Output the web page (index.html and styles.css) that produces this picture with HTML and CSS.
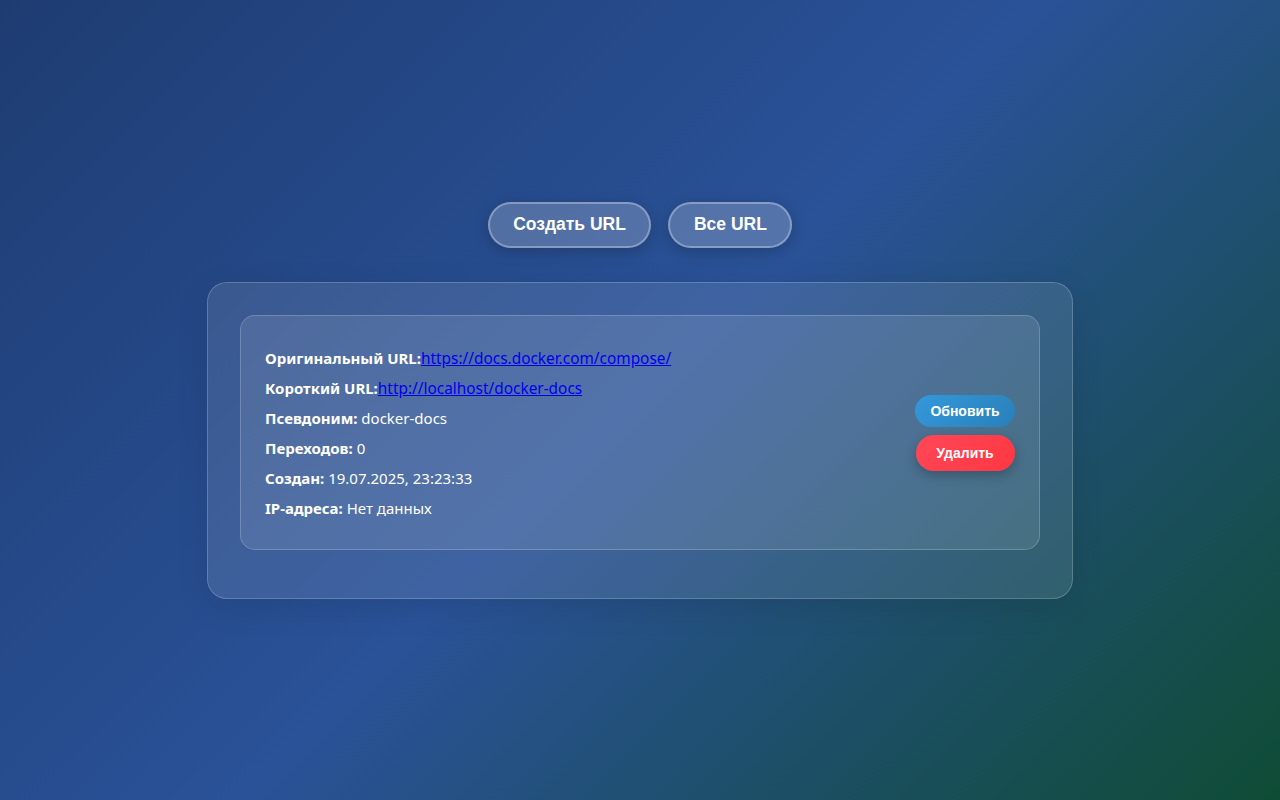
FILE: index.html
```html
<!DOCTYPE html>
<html lang="ru">
<head>
<meta charset="utf-8">
<title>URL</title>
<link rel="stylesheet" href="styles.css">
</head>
<body>
<main class="page">
  <nav class="nav">
    <button class="nav-btn">Создать URL</button>
    <button class="nav-btn">Все URL</button>
  </nav>
  <section class="panel">
    <div class="card">
      <div class="info">
        <p><strong>Оригинальный URL:</strong><a href="#">https://docs.docker.com/compose/</a></p>
        <p><strong>Короткий URL:</strong><a href="#">http://localhost/docker-docs</a></p>
        <p><strong>Псевдоним:</strong> docker-docs</p>
        <p><strong>Переходов:</strong> 0</p>
        <p><strong>Создан:</strong> 19.07.2025, 23:23:33</p>
        <p><strong>IP-адреса:</strong> Нет данных</p>
      </div>
      <div class="actions">
        <button class="btn btn-update">Обновить</button>
        <button class="btn btn-delete">Удалить</button>
      </div>
    </div>
  </section>
</main>
</body>
</html>
```

FILE: styles.css
```css
* { box-sizing: border-box; }
html, body { margin: 0; padding: 0; height: 100%; }
body {
  font-family: "Noto Sans", "Open Sans", sans-serif;
  background: linear-gradient(135deg, #1e3c72 0%, #2a5298 50%, #0f4c35 100%);
  color: #fff;
}
.page {
  min-height: 100vh;
  display: flex;
  flex-direction: column;
  align-items: center;
  justify-content: center;
}
.nav {
  display: flex;
  gap: 17px;
  margin-bottom: 34px;
}
.nav-btn {
  font-family: "Liberation Sans", Arial, sans-serif;
  font-weight: bold;
  font-size: 17.5px;
  color: #fff;
  height: 46px;
  padding: 0 23.5px;
  border-radius: 30px;
  background: rgba(255,255,255,0.2);
  border: 2px solid rgba(255,255,255,0.3);
  box-shadow: 0 4px 15px rgba(0,0,0,0.2);
}
.panel {
  width: 866px;
  padding: 32px 32px 48px;
  border-radius: 20px;
  background: rgba(255,255,255,0.1);
  border: 1px solid rgba(255,255,255,0.2);
  box-shadow: 0 8px 32px rgba(0,0,0,0.1);
}
.card {
  display: flex;
  align-items: center;
  justify-content: space-between;
  padding: 27px 24px 26px;
  border-radius: 15px;
  background: rgba(255,255,255,0.1);
  border: 1px solid rgba(255,255,255,0.2);
}
.info p {
  margin: 0;
  height: 30px;
  font-size: 15px;
  line-height: 30px;
}
.info a { color: #0000ee; text-decoration: underline; font-size: 15.4px; line-height: 1; }
.actions {
  display: flex;
  flex-direction: column;
  align-items: center;
  gap: 8px;
}
.btn {
  font-family: "Liberation Sans", Arial, sans-serif;
  font-weight: bold;
  font-size: 14px;
  color: #fff;
  border: none;
  width: 100px;
  height: 32px;
  border-radius: 20px;
}
.btn-update {
  background: linear-gradient(135deg, #3498db, #2980b9);
}
.btn-delete {
  width: 99px;
  height: 36px;
  background: linear-gradient(135deg, #ff4757, #ff3742);
  box-shadow: 0 4px 12px rgba(0,0,0,0.25);
}
```
